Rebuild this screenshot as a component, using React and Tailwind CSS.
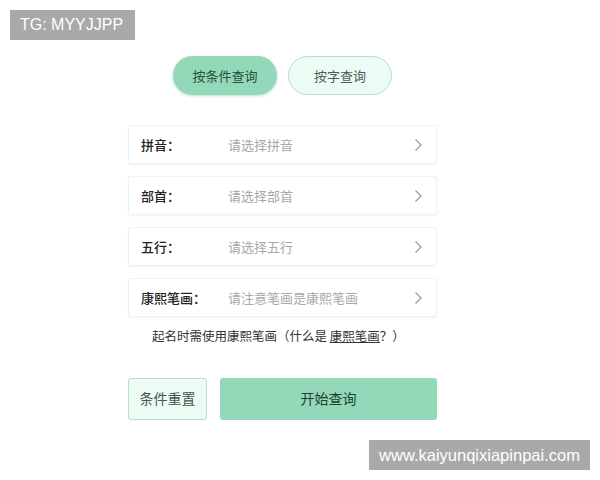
const rows = [
  { label: "拼音：", hint: "请选择拼音" },
  { label: "部首：", hint: "请选择部首" },
  { label: "五行：", hint: "请选择五行" },
  { label: "康熙笔画：", hint: "请注意笔画是康熙笔画" },
];

function Chevron() {
  return (
    <svg width="9" height="14" viewBox="0 0 9 14" fill="none">
      <path d="M1.5 1.5 L7 7 L1.5 12.5" stroke="#9a9a9a" strokeWidth="1.3" />
    </svg>
  );
}

export default function App() {
  return (
    <div
      className="relative w-[600px] h-[480px] bg-white overflow-hidden"
      style={{ fontFamily: '"Noto Sans CJK SC", "Noto Sans", sans-serif' }}
    >
      <div className="absolute left-[10px] top-[10px] w-[125px] h-[30px] bg-[#a9a9a9] flex items-center pl-[10px] text-white text-[16px] font-['Liberation_Sans',sans-serif]">
        TG: MYYJJPP
      </div>

      <div className="ml-[128px] w-[309px] pt-[56px]">
        <div className="flex justify-center gap-[11px]">
          <div className="w-[104px] h-[39px] rounded-full bg-[#93d9b9] shadow-[0_1px_3px_rgba(120,190,160,0.5)] flex items-center justify-center text-[13px] text-[#24523d]">
            按条件查询
          </div>
          <div className="w-[104px] h-[39px] rounded-full bg-[#ebfcf4] border border-[#bcdccc] flex items-center justify-center text-[13px] text-[#4a5f54]">
            按字查询
          </div>
        </div>

        <div className="mt-[30px] flex flex-col gap-[12px]">
          {rows.map((r) => (
            <div
              key={r.label}
              className="h-[39px] bg-white border border-[#f1f1f1] rounded-[2px] shadow-[0_1px_2px_rgba(0,0,0,0.04)] flex items-center pl-[12px] pr-[13px]"
            >
              <span className="w-[87px] text-[13px] font-medium text-[#222]">{r.label}</span>
              <span className="flex-1 text-[13px] text-[#a8a8a8]">{r.hint}</span>
              <Chevron />
            </div>
          ))}
        </div>

        <div className="mt-[10px] pl-[24px] text-[12.5px] text-[#333]">
          起名时需使用康熙笔画（什么是 <span className="underline">康熙笔画</span>？）
        </div>

        <div className="mt-[32px] flex gap-[13px]">
          <div className="w-[79px] h-[42px] rounded-[3px] bg-[#ebfcf4] border border-[#b9dccb] flex items-center justify-center text-[14px] text-[#4a524e]">
            条件重置
          </div>
          <div className="flex-1 h-[42px] rounded-[3px] bg-[#93d9b9] flex items-center justify-center text-[14px] text-[#223d31]">
            开始查询
          </div>
        </div>
      </div>

      <div className="absolute left-[369px] top-[440px] w-[221px] h-[30px] bg-[#a9a9a9] flex items-center justify-center text-white text-[16.5px] font-['Liberation_Sans',sans-serif]">
        www.kaiyunqixiapinpai.com
      </div>
    </div>
  );
}
